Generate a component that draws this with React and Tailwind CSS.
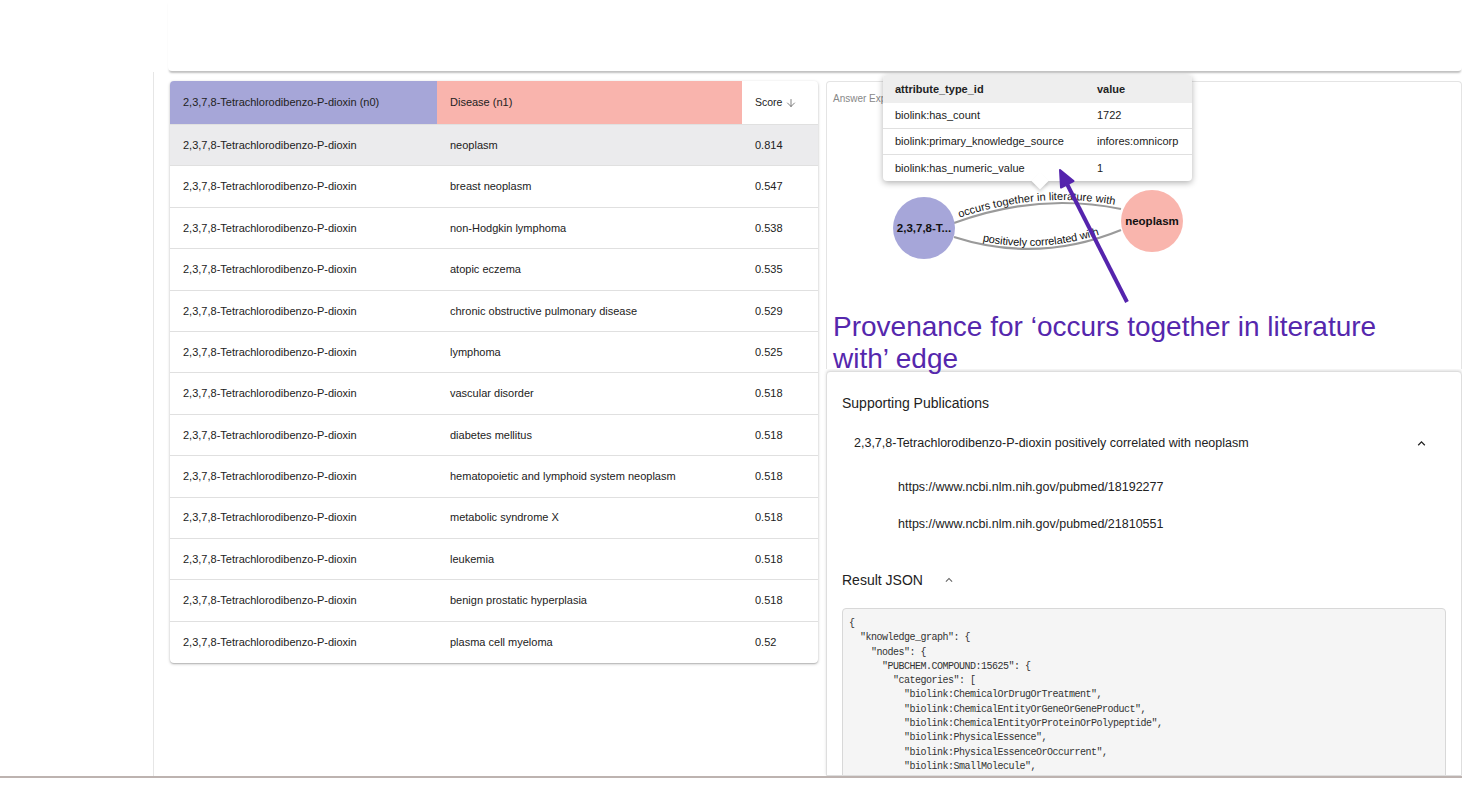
import { ArrowDown } from 'lucide-react';

const rows = [
  ['neoplasm', '0.814'],
  ['breast neoplasm', '0.547'],
  ['non-Hodgkin lymphoma', '0.538'],
  ['atopic eczema', '0.535'],
  ['chronic obstructive pulmonary disease', '0.529'],
  ['lymphoma', '0.525'],
  ['vascular disorder', '0.518'],
  ['diabetes mellitus', '0.518'],
  ['hematopoietic and lymphoid system neoplasm', '0.518'],
  ['metabolic syndrome X', '0.518'],
  ['leukemia', '0.518'],
  ['benign prostatic hyperplasia', '0.518'],
  ['plasma cell myeloma', '0.52'],
];

const attrs = [
  ['biolink:has_count', '1722'],
  ['biolink:primary_knowledge_source', 'infores:omnicorp'],
  ['biolink:has_numeric_value', '1'],
];

const json = `{
  "knowledge_graph": {
    "nodes": {
      "PUBCHEM.COMPOUND:15625": {
        "categories": [
          "biolink:ChemicalOrDrugOrTreatment",
          "biolink:ChemicalEntityOrGeneOrGeneProduct",
          "biolink:ChemicalEntityOrProteinOrPolypeptide",
          "biolink:PhysicalEssence",
          "biolink:PhysicalEssenceOrOccurrent",
          "biolink:SmallMolecule",`;

function ExpandLess({ size = 14, className = '' }) {
  return (
    <svg width={size} height={size} viewBox="0 0 24 24" className={className} fill="currentColor">
      <path d="M12 8l-6 6 1.41 1.41L12 10.83l4.59 4.58L18 14z" />
    </svg>
  );
}

function Graph() {
  return (
    <svg width="636" height="205" className="block">
      <defs>
        <path id="edgeTop" d="M127,117 Q211,86 294,103" />
        <path id="edgeBottom" d="M127,131 Q211,158 294,124" />
      </defs>
      <use href="#edgeTop" stroke="#9a9a9a" strokeWidth="2.2" fill="none" />
      <use href="#edgeBottom" stroke="#9a9a9a" strokeWidth="2.2" fill="none" />
      <text fontSize="11" fill="#111" fontFamily="Liberation Sans, Arial, sans-serif">
        <textPath href="#edgeTop" startOffset="50%" textAnchor="middle">
          <tspan dy="-3">occurs together in literature with</tspan>
        </textPath>
      </text>
      <text fontSize="11" fill="#111" fontFamily="Liberation Sans, Arial, sans-serif">
        <textPath href="#edgeBottom" startOffset="52%" textAnchor="middle">
          <tspan dy="-3">positively correlated with</tspan>
        </textPath>
      </text>
      <circle cx="97" cy="122" r="31" fill="#a6a6d9" />
      <circle cx="325" cy="115" r="31" fill="#f9b5ad" />
      <text x="97" y="126" textAnchor="middle" fontSize="11.5" fontWeight="bold" fill="#111" fontFamily="Liberation Sans, Arial, sans-serif">2,3,7,8-T...</text>
      <text x="325" y="119" textAnchor="middle" fontSize="11.5" fontWeight="bold" fill="#111" fontFamily="Liberation Sans, Arial, sans-serif">neoplasm</text>
    </svg>
  );
}

export default function App() {
  return (
    <div className="w-[1462px] h-[796px] bg-white flex flex-col overflow-hidden text-[#222]" style={{ fontFamily: '"Liberation Sans", Arial, sans-serif' }}>
      {/* bottom edge of the card above, scrolled out of view */}
      <div className="h-[72px] flex pl-[168px] shrink-0">
        <div className="flex-1 h-[71px] bg-white rounded-b shadow-[0_3px_2px_-1px_rgba(0,0,0,0.25)]" />
      </div>

      <div className="flex h-[704px] shrink-0 overflow-hidden">
        <div className="w-[154px] shrink-0 border-r border-[#e6e6e6]" />

        <div className="flex-1 flex pl-[16px] pt-[9px] gap-[8px] min-w-0">
          {/* Results table */}
          <div className="w-[648px] shrink-0 self-start bg-white rounded shadow-[0_1px_3px_rgba(0,0,0,0.25),0_1px_1px_rgba(0,0,0,0.12)] overflow-hidden text-[11px]">
            <div className="flex h-[44px] border-b border-[#e0e0e0]">
              <div className="w-[267px] bg-[#a6a6d8] flex items-center pl-[13px]">2,3,7,8-Tetrachlorodibenzo-P-dioxin (n0)</div>
              <div className="w-[305px] bg-[#f9b4ad] flex items-center pl-[13px]">Disease (n1)</div>
              <div className="flex-1 flex items-center pl-[13px] gap-[3px] text-[10.5px]">
                Score <ArrowDown size={12} strokeWidth={1.5} className="text-[#555]" />
              </div>
            </div>
            {rows.map(([disease, score], i) => (
              <div key={disease} className={`flex h-[41.4px] items-center ${i < rows.length - 1 ? 'border-b border-[#e0e0e0]' : ''} ${i === 0 ? 'bg-[#ebebed]' : ''}`}>
                <div className="w-[267px] pl-[13px]">2,3,7,8-Tetrachlorodibenzo-P-dioxin</div>
                <div className="w-[305px] pl-[13px]">{disease}</div>
                <div className="flex-1 pl-[13px]">{score}</div>
              </div>
            ))}
          </div>

          {/* Right panel */}
          <div className="flex-1 relative flex flex-col min-w-0">
            <div className="h-[288px] shrink-0 bg-white rounded-t border-l border-t border-r border-[#e4e4e4] relative">
              <div className="pl-[6px] pt-[10px] text-[10px] leading-[14px] text-[#888]">Answer Explorer</div>
              <Graph />
              <div className="pl-[6px] w-[560px] text-[28px] leading-[32px] text-[#5527ad] relative z-20">
                Provenance for ‘occurs together in literature with’ edge
              </div>
            </div>

            <div className="flex-1 bg-white border border-[#dedede] rounded-t shadow-[0_-1px_3px_rgba(0,0,0,0.12)] px-[15px] pt-[21px] mt-[2px] overflow-hidden">
              <div className="text-[14px] leading-[20px]">Supporting Publications</div>
              <div className="mt-[10px] h-[40px] flex items-center justify-between pl-[12px] pr-[17px] text-[12.5px]">
                <span>2,3,7,8-Tetrachlorodibenzo-P-dioxin positively correlated with neoplasm</span>
                <ExpandLess size={15} className="text-[#222]" />
              </div>
              <div className="mt-[6px] pl-[56px] text-[12.5px]">
                <div className="h-[37px] flex items-center">https://www.ncbi.nlm.nih.gov/pubmed/18192277</div>
                <div className="h-[37px] flex items-center">https://www.ncbi.nlm.nih.gov/pubmed/21810551</div>
              </div>
              <div className="mt-[27px] h-[20px] flex items-center text-[14px]">
                Result JSON
                <ExpandLess size={14} className="ml-[19px] text-[#666]" />
              </div>
              <div className="mt-[18px] bg-[#f5f5f5] border border-[#d8d8d8] rounded pl-[6px] pt-[8px] h-[300px]">
                <pre className="text-[10px] leading-[14.3px] tracking-[-0.5px] text-[#333]" style={{ fontFamily: '"Liberation Mono", monospace' }}>{json}</pre>
              </div>
            </div>

            {/* attribute popup */}
            <div className="absolute left-[57px] top-[-6px] w-[309px] bg-white rounded shadow-[0_2px_6px_rgba(0,0,0,0.3)] z-10 text-[11px]">
              <div className="flex h-[28px] items-center bg-[#eeeeee] rounded-t font-bold pl-[12px]">
                <div className="w-[202px]">attribute_type_id</div>
                <div>value</div>
              </div>
              {attrs.map(([k, v], i) => (
                <div key={k} className={`flex h-[26px] items-center pl-[12px] ${i < attrs.length - 1 ? 'border-b border-[#e0e0e0]' : ''}`}>
                  <div className="w-[202px]">{k}</div>
                  <div>{v}</div>
                </div>
              ))}
              <div className="absolute left-[151px] bottom-[-6px] w-[12px] h-[12px] bg-white rotate-45 shadow-[2px_2px_3px_rgba(0,0,0,0.15)]" />
            </div>

            {/* annotation arrow */}
            <svg className="absolute left-0 top-0 z-30 pointer-events-none" width="400" height="260">
              <line x1="301" y1="221" x2="241" y2="103" stroke="#5524ad" strokeWidth="4" />
              <polygon points="234,89 247.5,100 235,106.5" fill="#5524ad" stroke="#5524ad" strokeWidth="2" strokeLinejoin="round" />
            </svg>
          </div>
        </div>
      </div>

      <div className="flex-1 border-t-2 border-[#bdb3b0]" />
    </div>
  );
}
